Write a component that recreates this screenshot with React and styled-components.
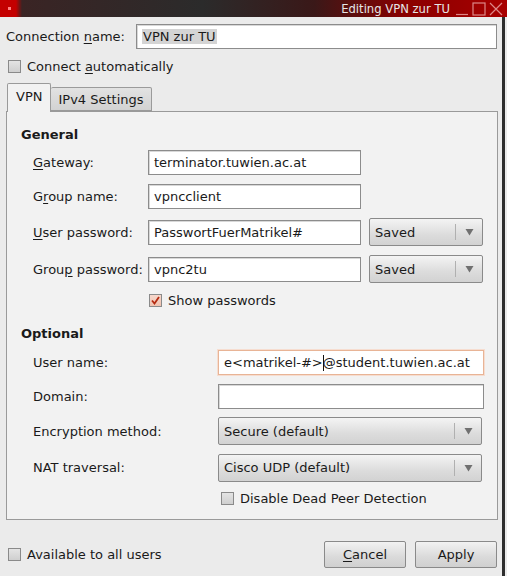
import React from 'react';
import styled, { createGlobalStyle } from 'styled-components';

const GlobalStyle = createGlobalStyle`
  html, body {
    margin: 0;
    padding: 0;
    background: #ebebeb;
  }
  body {
    font-family: "DejaVu Sans", "Liberation Sans", sans-serif;
    font-size: 13px;
    color: #1a1a1a;
  }
`;

const Window = styled.div`
  width: 507px;
  height: 576px;
  display: flex;
  flex-direction: column;
  background: #ebebeb;
  overflow: hidden;
`;

const TitleBar = styled.div`
  height: 17px;
  flex: none;
  display: flex;
  align-items: center;
  justify-content: flex-end;
  background: linear-gradient(90deg, #c40000 0, #c40000 16px, #3a2424 22px, #2b2b2b 40%, #3a1818 62%, #8a0000 80%, #a80000 100%);
  color: #e6e6e6;
  font-size: 11.6px;
  padding-right: 4px;
  position: relative;
`;

const MenuDot = styled.span`
  position: absolute;
  left: 8px;
  top: 7px;
  width: 3px;
  height: 3px;
  background: #ff8080;
`;

const WinButtons = styled.div`
  display: flex;
  align-items: center;
  gap: 3px;
  margin-left: 5px;
`;

const Content = styled.div`
  flex: 1;
  display: flex;
  flex-direction: column;
  padding: 7px 5px 0 6px;
  border-right: 3px solid #2e2e2e;
  margin-right: 2px;
`;

const TopRow = styled.div`
  display: flex;
  align-items: center;
  height: 25px;
`;

const TopLabel = styled.label`
  width: 130px;
  flex: none;
`;

const Input = styled.div`
  box-sizing: border-box;
  height: 25px;
  width: ${p => p.w || 'auto'};
  flex: ${p => (p.w ? 'none' : '1')};
  background: #fff;
  border: 1px solid ${p => (p.focus ? '#e8b496' : '#8c8c8c')};
  box-shadow: ${p => (p.focus ? '0 0 0 1px #f6ddd0' : 'inset 1px 1px 0 #d8d8d8')};
  display: flex;
  align-items: center;
  padding-left: 5px;
  white-space: nowrap;
  overflow: hidden;
`;

const Selected = styled.span`
  background: #d4d4d4;
  padding: 0 1px;
`;

const Caret = styled.span`
  display: inline-block;
  width: 1px;
  height: 16px;
  background: #111;
  margin: 0 -1px 0 0;
  vertical-align: middle;
`;

const CheckRow = styled.div`
  display: flex;
  align-items: center;
  gap: 6px;
  height: ${p => p.h || '20px'};
  margin: ${p => p.m || '0'};
`;

const Box = styled.span`
  box-sizing: border-box;
  width: 13px;
  height: 13px;
  flex: none;
  border: 1px solid #8a8a8a;
  background: ${p => (p.checked ? 'linear-gradient(#f6d8cc, #f0c2b0)' : 'linear-gradient(#e4e4e4, #cfcfcf)')};
  display: flex;
  align-items: center;
  justify-content: center;
`;

const Tabs = styled.div`
  display: flex;
  align-items: flex-end;
  margin-top: 6px;
  height: 29px;
  padding-left: 1px;
  position: relative;
  z-index: 1;
`;

const Tab = styled.div`
  box-sizing: border-box;
  height: ${p => (p.active ? '29px' : '24px')};
  padding: 0 ${p => (p.active ? '8px' : '7px')};
  display: flex;
  align-items: center;
  padding-bottom: ${p => (p.active ? '3px' : '0')};
  border: 1px solid #9a9a9a;
  border-bottom: ${p => (p.active ? 'none' : '1px solid #9a9a9a')};
  border-left: ${p => (p.active ? '1px solid #9a9a9a' : 'none')};
  background: ${p => (p.active ? '#f2f2f2' : 'linear-gradient(#e2e2e2, #d2d2d2)')};
  border-radius: 2px 2px 0 0;
  margin-bottom: ${p => (p.active ? '-1px' : '0')};
`;

const Panel = styled.div`
  box-sizing: border-box;
  width: 492px;
  height: 409px;
  flex: none;
  background: #f2f2f2;
  border: 1px solid #9a9a9a;
  padding: 14px 0 0 14px;
  display: flex;
  flex-direction: column;
`;

const SectionTitle = styled.div`
  font-weight: bold;
  height: 18px;
  line-height: 18px;
  margin-top: ${p => p.mt || '0'};
`;

const Grid = styled.div`
  display: grid;
  grid-template-columns: ${p => p.cols};
  row-gap: ${p => p.gap || '9px'};
  column-gap: 8px;
  align-items: center;
  padding-left: 12px;
  margin-top: ${p => p.mt || '0'};
`;

const Label = styled.div`
  white-space: nowrap;
`;

const Combo = styled.div`
  box-sizing: border-box;
  height: 28px;
  width: ${p => p.w || 'auto'};
  border: 1px solid #8a8a8a;
  border-radius: 2px;
  background: linear-gradient(#f4f4f4, #dcdcdc 60%, #d2d2d2);
  display: flex;
  align-items: center;
  padding-left: 5px;
`;

const ComboText = styled.span`
  flex: 1;
`;

const ComboArrow = styled.span`
  width: 26px;
  height: 16px;
  border-left: 1px solid #b0b0b0;
  display: flex;
  align-items: center;
  justify-content: center;
`;

const Cell = styled.div`
  grid-column: ${p => p.col || '2 / span 2'};
`;

const Footer = styled.div`
  display: flex;
  align-items: center;
  margin-top: 21px;
  padding-left: 2px;
`;

const Spacer = styled.div`
  flex: 1;
`;

const Button = styled.div`
  box-sizing: border-box;
  width: 82px;
  height: 27px;
  border: 1px solid #8a8a8a;
  border-radius: 2px;
  background: linear-gradient(#f2f2f2, #dadada 60%, #d0d0d0);
  display: flex;
  align-items: center;
  justify-content: center;
  margin-left: ${p => p.ml || '0'};
`;

const U = styled.span`
  text-decoration: underline;
  text-underline-offset: 2px;
`;

const Arrow = () => (
  <svg width="9" height="8" viewBox="0 0 9 8">
    <path d="M0.5 1 L8.5 1 L4.5 7.5 Z" fill="#707070" />
  </svg>
);

const Check = () => (
  <svg width="11" height="11" viewBox="0 0 11 11">
    <path d="M2 5.5 L4.5 8.5 L9 2" fill="none" stroke="#b52a10" strokeWidth="1.8" />
  </svg>
);

const CheckBox = ({ checked, children, m, h }) => (
  <CheckRow m={m} h={h}>
    <Box checked={checked}>{checked && <Check />}</Box>
    <span>{children}</span>
  </CheckRow>
);

const Select = ({ w, children }) => (
  <Combo w={w}>
    <ComboText>{children}</ComboText>
    <ComboArrow>
      <Arrow />
    </ComboArrow>
  </Combo>
);

export default function App() {
  return (
    <>
      <GlobalStyle />
      <Window>
        <TitleBar>
          <MenuDot />
          <span>Editing VPN zur TU</span>
          <WinButtons>
            <svg width="14" height="14" viewBox="0 0 14 14">
              <path d="M1 12.5 H13" stroke="#d88" strokeWidth="1.2" />
            </svg>
            <svg width="14" height="14" viewBox="0 0 14 14">
              <rect x="1" y="1" width="12" height="12" fill="none" stroke="#d88" strokeWidth="1.2" />
            </svg>
            <svg width="14" height="14" viewBox="0 0 14 14">
              <path d="M1 1 L13 13 M13 1 L1 13" stroke="#d88" strokeWidth="1.2" />
            </svg>
          </WinButtons>
        </TitleBar>
        <Content>
          <TopRow>
            <TopLabel>
              Connection <U>n</U>ame:
            </TopLabel>
            <Input>
              <Selected>VPN zur TU</Selected>
            </Input>
          </TopRow>
          <CheckBox m="7px 0 0 2px">
            Connect <U>a</U>utomatically
          </CheckBox>
          <Tabs>
            <Tab active>VPN</Tab>
            <Tab>IPv4 Settings</Tab>
          </Tabs>
          <Panel>
            <SectionTitle>General</SectionTitle>
            <Grid cols="107px 213px 114px" mt="6px" gap="9px">
              <Label>
                <U>G</U>ateway:
              </Label>
              <Input w="213px">terminator.tuwien.ac.at</Input>
              <div />
              <Label>
                G<U>r</U>oup name:
              </Label>
              <Input w="213px">vpncclient</Input>
              <div />
              <Label>
                <U>U</U>ser password:
              </Label>
              <Input w="213px">PasswortFuerMatrikel#</Input>
              <Select w="114px">Saved</Select>
              <Label>
                Grou<U>p</U> password:
              </Label>
              <Input w="213px">vpnc2tu</Input>
              <Select w="114px">Saved</Select>
              <Cell col="2 / span 2">
                <CheckBox m="0 0 0 1px" h="16px" checked>
                  Show passwords
                </CheckBox>
              </Cell>
            </Grid>
            <SectionTitle mt="17px">Optional</SectionTitle>
            <Grid cols="177px 266px" mt="7px" gap="8.5px">
              <Label>User name:</Label>
              <Input w="266px" focus>
                e&lt;matrikel-#&gt;<Caret />@student.tuwien.ac.at
              </Input>
              <Label>Domain:</Label>
              <Input w="266px" />
              <Label>Encryption method:</Label>
              <Select w="264px">Secure (default)</Select>
              <Label>NAT traversal:</Label>
              <Select w="264px">Cisco UDP (default)</Select>
              <Cell col="2">
                <CheckBox m="0 0 0 3px" h="16px">
                  Disable Dead Peer Detection
                </CheckBox>
              </Cell>
            </Grid>
          </Panel>
          <Footer>
            <CheckBox>Available to all users</CheckBox>
            <Spacer />
            <Button>
              <U>C</U>ancel
            </Button>
            <Button ml="9px">Apply</Button>
          </Footer>
        </Content>
      </Window>
    </>
  );
}
